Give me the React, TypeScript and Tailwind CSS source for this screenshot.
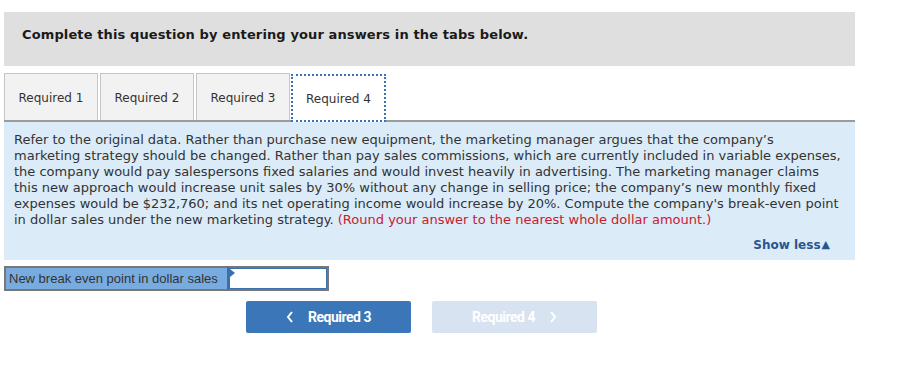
import React from 'react';

const tabs = ['Required 1', 'Required 2', 'Required 3', 'Required 4'];

export default function App() {
  const active = 3;
  return (
    <div className="w-[907px] h-[392px] bg-white pl-1 pr-[52px] pt-3 font-['DejaVu_Sans',sans-serif] text-[#222]">
      {/* Instruction bar */}
      <div className="h-[54px] bg-[#dfdfdf] pl-[18px] pt-[13px]">
        <p className="text-[13px] tracking-[0.12px] font-bold text-[#1a1a1a]">
          Complete this question by entering your answers in the tabs below.
        </p>
      </div>

      {/* Tabs */}
      <div className="mt-[7px] flex items-end gap-[2px] border-b-2 border-[#9b9b9b]">
        {tabs.map((t, i) =>
          i === active ? (
            <div
              key={t}
              className="-ml-[1px] w-[95px] h-[48px] -mb-[2px] pt-[1px] bg-white border-2 border-dotted border-[#3a72b5] flex items-center justify-center text-[12px] text-[#333]"
            >
              {t}
            </div>
          ) : (
            <div
              key={t}
              className="w-[94px] h-[47px] pt-[2px] bg-[#f2f2f2] border border-b-0 border-[#c6c6c6] flex items-center justify-center text-[12px] text-[#333]"
            >
              {t}
            </div>
          )
        )}
      </div>

      {/* Question panel */}
      <div className="bg-[#dbebf7] pl-[10px] pr-[6px] pt-[10px] pb-[6px]">
        <p className="text-[13px] leading-[16px] text-[#333] whitespace-nowrap">
          Refer to the original data. Rather than purchase new equipment, the marketing manager argues that the company’s
          <br />
          marketing strategy should be changed. Rather than pay sales commissions, which are currently included in variable expenses,
          <br />
          the company would pay salespersons fixed salaries and would invest heavily in advertising. The marketing manager claims
          <br />
          this new approach would increase unit sales by 30% without any change in selling price; the company’s new monthly fixed
          <br />
          expenses would be $232,760; and its net operating income would increase by 20%. Compute the company's break-even point
          <br />
          in dollar sales under the new marketing strategy.{' '}
          <span className="text-[#c8202f]">(Round your answer to the nearest whole dollar amount.)</span>
        </p>
        <div className="mt-[8px] flex justify-end pr-[19px]">
          <span className="text-[12px] font-bold text-[#2a5590] flex items-center">
            Show less<span className="ml-[1px] text-[11px]">▲</span>
          </span>
        </div>
      </div>

      {/* Answer row */}
      <div className="mt-[6px] flex">
        <div className="w-[223px] h-[25px] bg-[#78ace0] border-2 border-r-0 border-[#777] flex items-center pl-[3px] font-['Liberation_Sans',sans-serif] text-[13px] text-[#333]">
          New break even point in dollar sales
        </div>
        <div className="relative w-[102px] h-[25px] bg-white border-2 border-[#777] border-l-[#3a6fb0]">
          <div className="w-full h-full border border-[#3a6fb0]" />
          <span className="absolute left-[1px] top-[1px] w-0 h-0 border-t-[4px] border-b-[4px] border-l-[5px] border-t-transparent border-b-transparent border-l-[#3a6fb0]" />
        </div>
      </div>

      {/* Navigation buttons */}
      <div className="mt-[10px] flex gap-[21px] pl-[242px] font-['Roboto',sans-serif]">
        <button className="w-[165px] h-[32px] bg-[#3b76b8] rounded-[2px] flex items-center justify-center gap-[14px] text-white text-[14px] font-bold tracking-[-0.5px]">
          <svg width="8" height="12" viewBox="0 0 8 12" fill="none" stroke="white" strokeWidth="2">
            <path d="M6 1L2 6l4 5" />
          </svg>
          Required 3
        </button>
        <button className="w-[165px] h-[32px] bg-[#d7e3f0] rounded-[2px] flex items-center justify-center gap-[14px] text-white text-[14px] font-bold tracking-[-0.5px]">
          Required 4
          <svg width="8" height="12" viewBox="0 0 8 12" fill="none" stroke="white" strokeWidth="2">
            <path d="M2 1l4 5-4 5" />
          </svg>
        </button>
      </div>
    </div>
  );
}
